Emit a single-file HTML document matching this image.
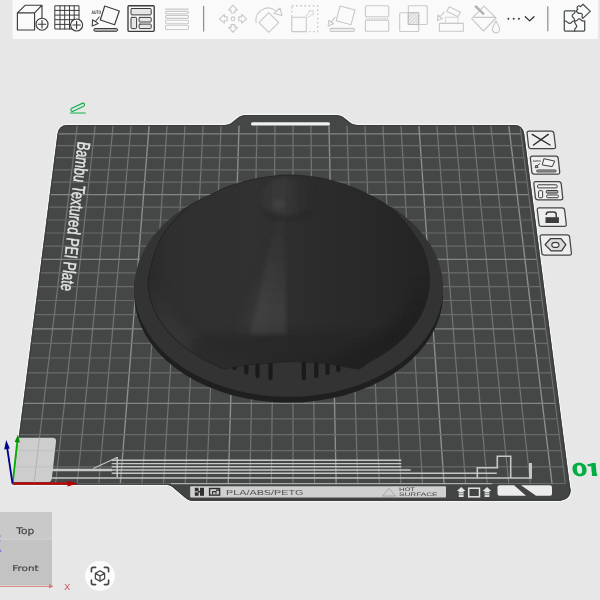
<!DOCTYPE html>
<html><head><meta charset="utf-8"><title>Plate</title>
<style>html,body{margin:0;padding:0;background:#e7e7e7;overflow:hidden}svg{display:block}text{font-family:"Liberation Sans",sans-serif;text-rendering:geometricPrecision}</style></head><body>
<svg width="600" height="600" viewBox="0 0 600 600">
<defs>
<linearGradient id="dg" x1="148" y1="0" x2="430" y2="0" gradientUnits="userSpaceOnUse"><stop offset="0" stop-color="#2a2a2a"/><stop offset="0.07" stop-color="#2f2f2f"/><stop offset="0.38" stop-color="#313131"/><stop offset="0.5" stop-color="#2e2e2e"/><stop offset="0.8" stop-color="#282828"/><stop offset="1" stop-color="#242424"/></linearGradient>
<linearGradient id="skg" x1="148" y1="0" x2="430" y2="0" gradientUnits="userSpaceOnUse"><stop offset="0" stop-color="#3a3a3a"/><stop offset="0.35" stop-color="#343434"/><stop offset="0.5" stop-color="#262626"/><stop offset="0.75" stop-color="#1c1c1c"/><stop offset="1" stop-color="#1e1e1e"/></linearGradient>
<linearGradient id="vf" x1="0" y1="275" x2="0" y2="335" gradientUnits="userSpaceOnUse"><stop offset="0" stop-color="#000"/><stop offset="1" stop-color="#fff"/></linearGradient><mask id="rm" maskUnits="userSpaceOnUse" x="100" y="150" width="400" height="300"><rect x="100" y="150" width="400" height="300" fill="url(#vf)"/></mask>
<radialGradient id="hl" cx="278" cy="330" r="60" gradientUnits="userSpaceOnUse" gradientTransform="translate(278 330) scale(0.45 1.6) translate(-278 -330)"><stop offset="0" stop-color="#4a4a4a" stop-opacity="0.7"/><stop offset="1" stop-color="#4a4a4a" stop-opacity="0"/></radialGradient>
<radialGradient id="kn" cx="280" cy="192" r="30" gradientUnits="userSpaceOnUse"><stop offset="0" stop-color="#454545"/><stop offset="0.6" stop-color="#353535"/><stop offset="1" stop-color="#2f2f2f" stop-opacity="0"/></radialGradient>
<radialGradient id="sk" cx="0.5" cy="0.5" r="0.5"><stop offset="0.7" stop-color="#1a1a1a" stop-opacity="0"/><stop offset="0.9" stop-color="#1a1a1a" stop-opacity="0.35"/><stop offset="1" stop-color="#1a1a1a" stop-opacity="0.5"/></radialGradient>
<linearGradient id="wb" x1="0" y1="322" x2="0" y2="372" gradientUnits="userSpaceOnUse"><stop offset="0" stop-color="#222" stop-opacity="0"/><stop offset="0.25" stop-color="#222" stop-opacity="0.45"/><stop offset="1" stop-color="#1e1e1e" stop-opacity="0.6"/></linearGradient>
<linearGradient id="st" x1="0" y1="214" x2="0" y2="332" gradientUnits="userSpaceOnUse"><stop offset="0" stop-color="#4c4c4c" stop-opacity="0.06"/><stop offset="0.35" stop-color="#4c4c4c" stop-opacity="0.22"/><stop offset="0.8" stop-color="#4c4c4c" stop-opacity="0.5"/><stop offset="1" stop-color="#4c4c4c" stop-opacity="0.45"/></linearGradient>
<linearGradient id="kg" x1="260" y1="0" x2="316" y2="0" gradientUnits="userSpaceOnUse"><stop offset="0" stop-color="#343434"/><stop offset="0.4" stop-color="#393939"/><stop offset="0.7" stop-color="#2f2f2f"/><stop offset="1" stop-color="#2a2a2a"/></linearGradient>
<filter id="b4" x="-20%" y="-20%" width="140%" height="140%"><feGaussianBlur stdDeviation="4"/></filter>
<filter id="b25" x="-50%" y="-20%" width="200%" height="140%"><feGaussianBlur stdDeviation="2.2"/></filter>
<filter id="b3" x="-50%" y="-20%" width="200%" height="140%"><feGaussianBlur stdDeviation="3"/></filter><filter id="b2" x="-50%" y="-50%" width="200%" height="200%"><feGaussianBlur stdDeviation="2"/></filter>
<clipPath id="gc"><rect x="0" y="125.8" width="600" height="358.5"/></clipPath>
<clipPath id="fc"><rect x="0" y="207" width="600" height="300"/></clipPath>
<clipPath id="pc"><path id="plp" d="M57.5 134 Q58.7 125 67.7 125 L225 125 C234 125 236 115 246 115 L336 115 C346 115 348 125 357 125 L514 125 Q523 125 524.2 134 L570 487 C572 495 567.5 500.7 558.5 500.7 L192 500.7 Q188 500.5 185 497.5 L172 486.5 Q170 484.8 166 484.8 L12.7 484.8 Z"/></clipPath>
</defs>
<rect width="600" height="600" fill="#e7e7e7"/>
<rect x="12.5" y="0" width="585.5" height="39" fill="#fafafa"/>
<path d="M57.5 134 Q58.7 125 67.7 125 L225 125 C234 125 236 115 246 115 L336 115 C346 115 348 125 357 125 L514 125 Q523 125 524.2 134 L570 487 C572 495 567.5 500.7 558.5 500.7 L192 500.7 Q188 500.5 185 497.5 L172 486.5 Q170 484.8 166 484.8 L12.7 484.8 Z" fill="#454747" stroke="#f8f8f8" stroke-width="2.4" stroke-opacity="0.85"/>
<path d="M57.5 134 Q58.7 125 67.7 125 L225 125 C234 125 236 115 246 115 L336 115 C346 115 348 125 357 125 L514 125 Q523 125 524.2 134 L570 487 C572 495 567.5 500.7 558.5 500.7 L192 500.7 Q188 500.5 185 497.5 L172 486.5 Q170 484.8 166 484.8 L12.7 484.8 Z" fill="#454747"/>
<g clip-path="url(#pc)">
<rect x="0" y="484.8" width="600" height="20" fill="#434545"/>
<g clip-path="url(#gc)">
<line x1="33" y1="491.6" x2="77.9" y2="119.8" stroke="#717575" stroke-width="1.2"/>
<line x1="54.7" y1="491.6" x2="95.8" y2="119.8" stroke="#717575" stroke-width="1.2"/>
<line x1="76.4" y1="491.6" x2="113.7" y2="119.8" stroke="#717575" stroke-width="1.2"/>
<line x1="98" y1="491.6" x2="131.6" y2="119.8" stroke="#717575" stroke-width="1.2"/>
<line x1="119.7" y1="491.6" x2="149.6" y2="119.8" stroke="#8c9090" stroke-width="1.35"/>
<line x1="141.4" y1="491.6" x2="167.5" y2="119.8" stroke="#717575" stroke-width="1.2"/>
<line x1="163" y1="491.6" x2="185.4" y2="119.8" stroke="#717575" stroke-width="1.2"/>
<line x1="184.7" y1="491.6" x2="203.4" y2="119.8" stroke="#717575" stroke-width="1.2"/>
<line x1="206.3" y1="491.6" x2="221.3" y2="119.8" stroke="#717575" stroke-width="1.2"/>
<line x1="228" y1="491.6" x2="239.2" y2="119.8" stroke="#8c9090" stroke-width="1.35"/>
<line x1="249.7" y1="491.6" x2="257.1" y2="119.8" stroke="#717575" stroke-width="1.2"/>
<line x1="271.3" y1="491.6" x2="275.1" y2="119.8" stroke="#717575" stroke-width="1.2"/>
<line x1="293" y1="491.6" x2="293" y2="119.8" stroke="#717575" stroke-width="1.2"/>
<line x1="314.7" y1="491.6" x2="310.9" y2="119.8" stroke="#717575" stroke-width="1.2"/>
<line x1="336.3" y1="491.6" x2="328.9" y2="119.8" stroke="#8c9090" stroke-width="1.35"/>
<line x1="358" y1="491.6" x2="346.8" y2="119.8" stroke="#717575" stroke-width="1.2"/>
<line x1="379.7" y1="491.6" x2="364.7" y2="119.8" stroke="#717575" stroke-width="1.2"/>
<line x1="401.3" y1="491.6" x2="382.6" y2="119.8" stroke="#717575" stroke-width="1.2"/>
<line x1="423" y1="491.6" x2="400.6" y2="119.8" stroke="#717575" stroke-width="1.2"/>
<line x1="444.6" y1="491.6" x2="418.5" y2="119.8" stroke="#8c9090" stroke-width="1.35"/>
<line x1="466.3" y1="491.6" x2="436.4" y2="119.8" stroke="#717575" stroke-width="1.2"/>
<line x1="488" y1="491.6" x2="454.4" y2="119.8" stroke="#717575" stroke-width="1.2"/>
<line x1="509.6" y1="491.6" x2="472.3" y2="119.8" stroke="#717575" stroke-width="1.2"/>
<line x1="531.3" y1="491.6" x2="490.2" y2="119.8" stroke="#717575" stroke-width="1.2"/>
<line x1="553" y1="491.6" x2="508.1" y2="119.8" stroke="#8c9090" stroke-width="1.35"/>
<line x1="3.9" y1="466.8" x2="563.2" y2="466.8" stroke="#676b6b" stroke-width="1.2"/>
<line x1="6.1" y1="450.6" x2="561.2" y2="450.6" stroke="#676b6b" stroke-width="1.2"/>
<line x1="8.3" y1="434.6" x2="559.1" y2="434.6" stroke="#676b6b" stroke-width="1.2"/>
<line x1="10.4" y1="418.8" x2="557.1" y2="418.8" stroke="#676b6b" stroke-width="1.2"/>
<line x1="12.5" y1="403.3" x2="555.2" y2="403.3" stroke="#828686" stroke-width="1.3"/>
<line x1="14.6" y1="387.9" x2="553.2" y2="387.9" stroke="#676b6b" stroke-width="1.2"/>
<line x1="16.7" y1="372.8" x2="551.3" y2="372.8" stroke="#676b6b" stroke-width="1.2"/>
<line x1="18.7" y1="358" x2="549.4" y2="358" stroke="#676b6b" stroke-width="1.2"/>
<line x1="20.7" y1="343.3" x2="547.6" y2="343.3" stroke="#676b6b" stroke-width="1.2"/>
<line x1="22.6" y1="328.8" x2="545.7" y2="328.8" stroke="#828686" stroke-width="1.3"/>
<line x1="24.6" y1="314.6" x2="543.9" y2="314.6" stroke="#676b6b" stroke-width="1.2"/>
<line x1="26.5" y1="300.5" x2="542.2" y2="300.5" stroke="#676b6b" stroke-width="1.2"/>
<line x1="28.4" y1="286.6" x2="540.4" y2="286.6" stroke="#676b6b" stroke-width="1.2"/>
<line x1="30.2" y1="272.9" x2="538.7" y2="272.9" stroke="#676b6b" stroke-width="1.2"/>
<line x1="32" y1="259.4" x2="536.9" y2="259.4" stroke="#828686" stroke-width="1.3"/>
<line x1="33.8" y1="246.1" x2="535.3" y2="246.1" stroke="#676b6b" stroke-width="1.2"/>
<line x1="35.6" y1="233" x2="533.6" y2="233" stroke="#676b6b" stroke-width="1.2"/>
<line x1="37.4" y1="220" x2="531.9" y2="220" stroke="#676b6b" stroke-width="1.2"/>
<line x1="39.1" y1="207.2" x2="530.3" y2="207.2" stroke="#676b6b" stroke-width="1.2"/>
<line x1="40.8" y1="194.6" x2="528.7" y2="194.6" stroke="#828686" stroke-width="1.3"/>
<line x1="42.5" y1="182.1" x2="527.1" y2="182.1" stroke="#676b6b" stroke-width="1.2"/>
<line x1="44.2" y1="169.8" x2="525.6" y2="169.8" stroke="#676b6b" stroke-width="1.2"/>
<line x1="45.8" y1="157.7" x2="524" y2="157.7" stroke="#676b6b" stroke-width="1.2"/>
<line x1="47.5" y1="145.7" x2="522.5" y2="145.7" stroke="#676b6b" stroke-width="1.2"/>
<line x1="49.1" y1="133.8" x2="521" y2="133.8" stroke="#828686" stroke-width="1.3"/>
<line x1="565.3" y1="483.3" x2="519.8" y2="124.5" stroke="#707474" stroke-width="1"/>
</g>
<line x1="10.3" y1="483.5" x2="565.3" y2="483.5" stroke="#6c7070" stroke-width="0.9"/>
<path d="M57.5 134 Q58.7 125 67.7 125 L225 125 C234 125 236 115 246 115 L336 115 C346 115 348 125 357 125 L514 125 Q523 125 524.2 134 L570 487 C572 495 567.5 500.7 558.5 500.7 L192 500.7 Q188 500.5 185 497.5 L172 486.5 Q170 484.8 166 484.8 L12.7 484.8 Z" fill="none" stroke="#383a3a" stroke-width="2.2" opacity="0.85"/>
</g>
<rect x="251" y="122.3" width="79" height="3.2" rx="1.6" fill="#f0f0f0"/>
<g clip-path="url(#fc)">
<polygon points="442.9,288 441.6,278.6 439.1,269.3 435.6,260.3 431,251.6 425.3,243.2 418.7,235.2 411.2,227.7 402.9,220.6 393.8,214.1 383.9,208.2 373.5,202.9 362.4,198.3 350.9,194.3 339,191 326.8,188.4 314.3,186.6 301.6,185.5 288.9,185.1 276.2,185.5 263.5,186.6 251,188.4 238.8,191 226.9,194.3 215.3,198.3 204.3,202.9 193.8,208.2 183.9,214.1 174.8,220.6 166.4,227.7 158.9,235.2 152.2,243.2 146.6,251.6 141.9,260.3 138.3,269.3 135.8,278.6 134.5,288 134.3,297.5 135.3,307 137.5,316.5 140.9,325.8 145.5,334.9 151.2,343.7 158.1,352.2 166,360.2 175,367.7 185,374.7 195.8,380.9 207.5,386.5 219.8,391.3 232.8,395.4 246.3,398.5 260.1,400.8 274.2,402.2 288.4,402.6 302.7,402.2 316.8,400.8 330.6,398.5 344.1,395.4 357.1,391.3 369.5,386.5 381.1,380.9 392,374.7 402,367.7 411,360.2 419,352.2 425.9,343.7 431.7,334.9 436.3,325.8 439.7,316.5 442,307 443,297.5" fill="#1f1f1f"/>
<path d="M134.3 289 L134.3 282 L443 282 L443 289 Z" fill="#232323"/>
<polygon points="442.9,282.2 441.6,272.8 439.1,263.5 435.6,254.5 431,245.8 425.3,237.4 418.7,229.4 411.2,221.9 402.9,214.8 393.8,208.3 383.9,202.4 373.5,197.1 362.4,192.5 350.9,188.5 339,185.2 326.8,182.6 314.3,180.8 301.6,179.7 288.9,179.3 276.2,179.7 263.5,180.8 251,182.6 238.8,185.2 226.9,188.5 215.3,192.5 204.3,197.1 193.8,202.4 183.9,208.3 174.8,214.8 166.4,221.9 158.9,229.4 152.2,237.4 146.6,245.8 141.9,254.5 138.3,263.5 135.8,272.8 134.5,282.2 134.3,291.7 135.3,301.2 137.5,310.7 140.9,320 145.5,329.1 151.2,337.9 158.1,346.4 166,354.4 175,361.9 185,368.9 195.8,375.1 207.5,380.7 219.8,385.5 232.8,389.6 246.3,392.7 260.1,395 274.2,396.4 288.4,396.8 302.7,396.4 316.8,395 330.6,392.7 344.1,389.6 357.1,385.5 369.5,380.7 381.1,375.1 392,368.9 402,361.9 411,354.4 419,346.4 425.9,337.9 431.7,329.1 436.3,320 439.7,310.7 442,301.2 443,291.7" fill="#333333"/>
</g>
<line x1="234.5" y1="358" x2="234.5" y2="368.1" stroke="#1a1a1a" stroke-width="4.2" stroke-linecap="round"/>
<line x1="246.3" y1="358" x2="246.3" y2="372.6" stroke="#1a1a1a" stroke-width="4.2" stroke-linecap="round"/>
<line x1="257.5" y1="358" x2="257.5" y2="376.1" stroke="#1a1a1a" stroke-width="4.2" stroke-linecap="round"/>
<line x1="270.5" y1="358" x2="270.5" y2="378.1" stroke="#1a1a1a" stroke-width="4.2" stroke-linecap="round"/>
<line x1="303.8" y1="358" x2="303.8" y2="378.1" stroke="#1a1a1a" stroke-width="4.2" stroke-linecap="round"/>
<line x1="316.3" y1="358" x2="316.3" y2="376.1" stroke="#1a1a1a" stroke-width="4.2" stroke-linecap="round"/>
<line x1="327.5" y1="358" x2="327.5" y2="373.1" stroke="#1a1a1a" stroke-width="4.2" stroke-linecap="round"/>
<line x1="338.3" y1="358" x2="338.3" y2="370.1" stroke="#1a1a1a" stroke-width="4.2" stroke-linecap="round"/>
<clipPath id="dc"><path d="M148.4 282 C148.7 280.3 148.9 276.5 150 272 C151.1 267.5 152.5 261.2 154.7 255 C156.9 248.8 159.6 241 163.3 235 C167 229 172.2 223.8 176.7 219 C181.1 214.2 184.7 209.8 190 206 C195.3 202.2 202 199.6 208.7 196.3 C215.4 193.1 221.9 189.4 230 186.5 C238.1 183.6 247.9 180.8 257.5 179 C267.1 177.2 277.1 175.6 287.5 175.5 C297.9 175.4 309.6 176.6 320 178.5 C330.4 180.4 341.7 184.1 350 187 C358.3 189.9 363.3 192.5 370 196 C376.7 199.5 384.7 204 390 208 C395.3 212 398.7 216.4 402 220 C405.3 223.6 407.5 226.4 410 229.7 C412.5 233 415 236.9 417 240 C419 243.1 420.3 244.2 422 248.3 C423.7 252.4 426.1 258.7 427.3 264.3 C428.5 269.9 428.7 279.1 429 282 L428.5 289.5 L426.9 297.9 L424.3 306.2 L420.6 314.4 L416 322.2 L410.4 329.8 L403.9 337 L396.5 343.7 L388.3 350 L379.4 355.8 L369.7 361 L359.5 368.5 L359.5 368.5 C357.9 368.3 353.2 367.8 350 367.3 C346.8 366.8 344.2 366.2 340 365.5 C335.8 364.8 330 363.6 325 363 C320 362.4 315.8 362 310 361.7 C304.2 361.4 296.7 360.9 290 361 C283.3 361.1 275.8 362.1 270 362.5 C264.2 362.9 260 363.1 255 363.6 C250 364.1 243.8 364.9 240 365.5 C236.2 366.1 234.7 366.5 232 367 C229.3 367.5 225 368.3 223.6 368.6 L223.6 368.6 L212.6 363.3 L202.2 358.2 L192.6 352.4 L183.7 346 L175.7 339.1 L168.7 331.7 L162.6 323.9 L157.5 315.8 L153.6 307.3 L150.7 298.7 L149 289.9Z"/></clipPath>
<path d="M148.4 282 C148.7 280.3 148.9 276.5 150 272 C151.1 267.5 152.5 261.2 154.7 255 C156.9 248.8 159.6 241 163.3 235 C167 229 172.2 223.8 176.7 219 C181.1 214.2 184.7 209.8 190 206 C195.3 202.2 202 199.6 208.7 196.3 C215.4 193.1 221.9 189.4 230 186.5 C238.1 183.6 247.9 180.8 257.5 179 C267.1 177.2 277.1 175.6 287.5 175.5 C297.9 175.4 309.6 176.6 320 178.5 C330.4 180.4 341.7 184.1 350 187 C358.3 189.9 363.3 192.5 370 196 C376.7 199.5 384.7 204 390 208 C395.3 212 398.7 216.4 402 220 C405.3 223.6 407.5 226.4 410 229.7 C412.5 233 415 236.9 417 240 C419 243.1 420.3 244.2 422 248.3 C423.7 252.4 426.1 258.7 427.3 264.3 C428.5 269.9 428.7 279.1 429 282 L428.5 289.5 L426.9 297.9 L424.3 306.2 L420.6 314.4 L416 322.2 L410.4 329.8 L403.9 337 L396.5 343.7 L388.3 350 L379.4 355.8 L369.7 361 L359.5 368.5 L359.5 368.5 C357.9 368.3 353.2 367.8 350 367.3 C346.8 366.8 344.2 366.2 340 365.5 C335.8 364.8 330 363.6 325 363 C320 362.4 315.8 362 310 361.7 C304.2 361.4 296.7 360.9 290 361 C283.3 361.1 275.8 362.1 270 362.5 C264.2 362.9 260 363.1 255 363.6 C250 364.1 243.8 364.9 240 365.5 C236.2 366.1 234.7 366.5 232 367 C229.3 367.5 225 368.3 223.6 368.6 L223.6 368.6 L212.6 363.3 L202.2 358.2 L192.6 352.4 L183.7 346 L175.7 339.1 L168.7 331.7 L162.6 323.9 L157.5 315.8 L153.6 307.3 L150.7 298.7 L149 289.9Z" fill="url(#dg)"/>
<path d="M148.4 282 C148.7 280.3 148.9 276.5 150 272 C151.1 267.5 152.5 261.2 154.7 255 C156.9 248.8 159.6 241 163.3 235 C167 229 172.2 223.8 176.7 219 C181.1 214.2 184.7 209.8 190 206 C195.3 202.2 202 199.6 208.7 196.3 C215.4 193.1 221.9 189.4 230 186.5 C238.1 183.6 247.9 180.8 257.5 179 C267.1 177.2 277.1 175.6 287.5 175.5 C297.9 175.4 309.6 176.6 320 178.5 C330.4 180.4 341.7 184.1 350 187 C358.3 189.9 363.3 192.5 370 196 C376.7 199.5 384.7 204 390 208 C395.3 212 398.7 216.4 402 220 C405.3 223.6 407.5 226.4 410 229.7 C412.5 233 415 236.9 417 240 C419 243.1 420.3 244.2 422 248.3 C423.7 252.4 426.1 258.7 427.3 264.3 C428.5 269.9 428.7 279.1 429 282 L428.5 289.5 L426.9 297.9 L424.3 306.2 L420.6 314.4 L416 322.2 L410.4 329.8 L403.9 337 L396.5 343.7 L388.3 350 L379.4 355.8 L369.7 361 L359.5 368.5 L359.5 368.5 C357.9 368.3 353.2 367.8 350 367.3 C346.8 366.8 344.2 366.2 340 365.5 C335.8 364.8 330 363.6 325 363 C320 362.4 315.8 362 310 361.7 C304.2 361.4 296.7 360.9 290 361 C283.3 361.1 275.8 362.1 270 362.5 C264.2 362.9 260 363.1 255 363.6 C250 364.1 243.8 364.9 240 365.5 C236.2 366.1 234.7 366.5 232 367 C229.3 367.5 225 368.3 223.6 368.6 L223.6 368.6 L212.6 363.3 L202.2 358.2 L192.6 352.4 L183.7 346 L175.7 339.1 L168.7 331.7 L162.6 323.9 L157.5 315.8 L153.6 307.3 L150.7 298.7 L149 289.9Z" fill="none" stroke="#1f1f1f" stroke-width="2" opacity="0.8" stroke-linejoin="round"/>
<path d="M148.4 282 C148.7 280.3 148.9 276.5 150 272 C151.1 267.5 152.5 261.2 154.7 255 C156.9 248.8 159.6 241 163.3 235 C167 229 172.2 223.8 176.7 219 C181.1 214.2 184.7 209.8 190 206 C195.3 202.2 202 199.6 208.7 196.3 C215.4 193.1 221.9 189.4 230 186.5 C238.1 183.6 247.9 180.8 257.5 179 C267.1 177.2 277.1 175.6 287.5 175.5 C297.9 175.4 309.6 176.6 320 178.5 C330.4 180.4 341.7 184.1 350 187 C358.3 189.9 363.3 192.5 370 196 C376.7 199.5 384.7 204 390 208 C395.3 212 398.7 216.4 402 220 C405.3 223.6 407.5 226.4 410 229.7 C412.5 233 415 236.9 417 240 C419 243.1 420.3 244.2 422 248.3 C423.7 252.4 426.1 258.7 427.3 264.3 C428.5 269.9 428.7 279.1 429 282 L428.5 289.5 L426.9 297.9 L424.3 306.2 L420.6 314.4 L416 322.2 L410.4 329.8 L403.9 337 L396.5 343.7 L388.3 350 L379.4 355.8 L369.7 361 L359.5 368.5 L359.5 368.5 C357.9 368.3 353.2 367.8 350 367.3 C346.8 366.8 344.2 366.2 340 365.5 C335.8 364.8 330 363.6 325 363 C320 362.4 315.8 362 310 361.7 C304.2 361.4 296.7 360.9 290 361 C283.3 361.1 275.8 362.1 270 362.5 C264.2 362.9 260 363.1 255 363.6 C250 364.1 243.8 364.9 240 365.5 C236.2 366.1 234.7 366.5 232 367 C229.3 367.5 225 368.3 223.6 368.6 L223.6 368.6 L212.6 363.3 L202.2 358.2 L192.6 352.4 L183.7 346 L175.7 339.1 L168.7 331.7 L162.6 323.9 L157.5 315.8 L153.6 307.3 L150.7 298.7 L149 289.9Z" fill="url(#dg)"/>
<g clip-path="url(#dc)">
<path d="M356.7 201.3 L371.5 208 L384.9 215.9 L396.6 225 L406.5 235 L414.3 245.8 L420.1 257.2 L423.5 269 L424.7 281 L423.5 293 L420.1 304.8 L414.3 316.2 L406.5 327 L396.6 337 L384.9 346.1 L371.5 354 L356.7 360.7 L340.7 366 L323.9 369.9 L306.5 372.2 L288.7 373 L270.9 372.2 L253.5 369.9 L236.7 366 L220.7 360.7 L205.9 354 L192.5 346.1 L180.8 337 L170.9 327 L163.1 316.2 L157.3 304.8 L153.9 293 L152.7 281 L153.9 269 L157.3 257.2 L163.1 245.8 L170.9 235 L180.8 225 L192.5 215.9 L205.9 208 L220.7 201.3" fill="none" stroke="url(#skg)" stroke-width="20" opacity="0.75" filter="url(#b4)" mask="url(#rm)"/>
<path d="M190 338 Q290 326 390 338 L390 390 L190 390 Z" fill="#232323" opacity="0.45" filter="url(#b4)"/>
<polygon points="277,218 285,216 286,334 250,334" fill="url(#st)" filter="url(#b25)"/>
<polygon points="272,235 281,235 268,334 234,334" fill="url(#st)" opacity="0.3" filter="url(#b4)"/>
<ellipse cx="288" cy="197" rx="27" ry="19.5" fill="url(#kg)" filter="url(#b2)"/>
<path d="M266 214 Q288 224 310 213" fill="none" stroke="#242424" stroke-width="2.5" opacity="0.6" filter="url(#b2)"/>
<ellipse cx="279" cy="204" rx="7" ry="5" fill="#505050" opacity="0.4" filter="url(#b2)"/>
</g>
<g clip-path="url(#pc)">
<path d="M9.6 482 L48.5 482 Q51.5 482 51.9 478 L56 441.7 Q56.4 437.7 52.4 437.7 L15.4 437.7 Z" fill="#cdcdcd"/>
<line x1="34.2" y1="482" x2="39.5" y2="437.7" stroke="#aeb0b0" stroke-width="0.9"/>
<line x1="14.6" y1="466.8" x2="53.2" y2="466.8" stroke="#bdbfbf" stroke-width="0.9"/>
<line x1="16.7" y1="450.6" x2="55" y2="450.6" stroke="#bdbfbf" stroke-width="0.9"/>
</g>
<g stroke="#c6c6c6" fill="none" stroke-linecap="butt">
<line x1="52" y1="470" x2="112" y2="470" stroke-width="2.6"/>
<line x1="51.5" y1="478" x2="532" y2="478" stroke-width="1.3"/>
<line x1="93.3" y1="468.6" x2="117" y2="457.5" stroke-width="1.1"/>
<line x1="117.2" y1="457" x2="117.2" y2="477" stroke-width="1.5"/>
<line x1="111.7" y1="460.3" x2="401.3" y2="460.3" stroke-width="1.45"/>
<line x1="111.7" y1="463.6" x2="401.3" y2="463.6" stroke-width="1.45"/>
<line x1="111.7" y1="466.8" x2="401.3" y2="466.8" stroke-width="1.45"/>
<line x1="111.7" y1="470" x2="410.7" y2="470" stroke-width="1.45"/>
<line x1="111.7" y1="473.3" x2="496.8" y2="473.3" stroke-width="1.45"/>
<path d="M477.3 478 V467.7 H497.3 V456.2 H510.7 V478" stroke-width="1.6"/>
<line x1="530.5" y1="463" x2="530.5" y2="478.5" stroke-width="3"/>
<line x1="171" y1="483.7" x2="492" y2="483.7" stroke-width="1" stroke="#bdbdbd"/>
</g>
<rect x="190.2" y="486.3" width="255.8" height="11.1" rx="1" fill="#d0d0d0"/>
<g fill="#303030"><rect x="194.8" y="487.8" width="3.8" height="3.5"/><rect x="194.8" y="492.3" width="3.8" height="3.5"/><rect x="200" y="487.8" width="4" height="8"/><rect x="198" y="490.9" width="3" height="1.6"/></g>
<rect x="209.6" y="488.5" width="10" height="6.6" fill="none" stroke="#303030" stroke-width="1.4"/><path d="M212.6 494.6 V491.6 H216 V494" fill="none" stroke="#303030" stroke-width="1.1"/><rect x="216" y="489.4" width="3" height="1.4" fill="#303030"/>
<text opacity="0.99" x="226" y="495.2" font-size="7.3" fill="#505050" textLength="77.5" lengthAdjust="spacingAndGlyphs">PLA/ABS/PETG</text>
<path d="M389 488.3 L395.6 496 H382.4 Z" fill="none" stroke="#9a9a9a" stroke-width="0.8"/>
<text opacity="0.99" x="399" y="491.4" font-size="5" fill="#444" textLength="16" lengthAdjust="spacingAndGlyphs">HOT</text>
<text opacity="0.99" x="399" y="496.2" font-size="5" fill="#444" textLength="38.5" lengthAdjust="spacingAndGlyphs">SURFACE</text>
<path d="M461.2 487 L465.5 491 H463.6 V497 H458.8 V491 H456.9 Z" fill="#e4e4e4"/>
<path d="M487 487 L491.3 491 H489.4 V497 H484.6 V491 H482.7 Z" fill="#e4e4e4"/>
<path d="M458.6 492.7 H463.8 M458.6 494.7 H463.8" stroke="#434545" stroke-width="0.6"/>
<path d="M484.4 492.7 H489.6 M484.4 494.7 H489.6" stroke="#434545" stroke-width="0.6"/>
<rect x="468.7" y="488.2" width="10.8" height="8.6" fill="none" stroke="#e4e4e4" stroke-width="1.5"/>
<path d="M499.5 485.2 H514 L526 495.8 H499.5 Q497.5 495.8 497.5 493.8 V487.2 Q497.5 485.2 499.5 485.2 Z" fill="#ececec"/>
<path d="M521 485.2 H550 Q552 485.2 552 487.2 V493.8 Q552 495.8 550 495.8 H536 Z" fill="#ececec"/>
<text opacity="0.99" transform="translate(78 141.3) rotate(96.6)" font-size="18" fill="#e6e6e6" stroke="#e6e6e6" stroke-width="0.45" textLength="150" lengthAdjust="spacingAndGlyphs">Bambu Textured PEI Plate</text>
<text opacity="0.99" transform="translate(572 476) skewX(5) scale(1.5 1)" font-size="17.8" font-weight="900" letter-spacing="-1.6" fill="#00ae42" style="font-family:'Noto Sans CJK SC',sans-serif">01</text>
<rect x="587.3" y="472.7" width="4.6" height="4" fill="#e7e7e7"/><rect x="597.2" y="472.7" width="2.8" height="4" fill="#e7e7e7"/>
<g stroke="#12b14e" fill="none" stroke-width="1.15"><rect x="-7.4" y="-1.6" width="14.8" height="3.2" rx="1.6" transform="translate(77.7 107.3) rotate(-25.5)"/><line x1="70" y1="113" x2="85.7" y2="113" stroke-width="1"/></g>
<line x1="12.5" y1="483.6" x2="69" y2="483.6" stroke="#d40000" stroke-width="2"/><polygon points="67.5,480.8 78,483.6 67.5,486.4" fill="#b00000"/>
<line x1="12.7" y1="483.5" x2="17.3" y2="441" stroke="#00b000" stroke-width="1.8"/><polygon points="14.6,442 18,434.5 19.8,442.6" fill="#009000"/>
<line x1="12.5" y1="483.5" x2="7.2" y2="448" stroke="#000090" stroke-width="1.8"/><polygon points="4.2,449.5 6.2,440 9.8,448.6" fill="#000090"/>
<path d="M527.1 133.4 Q526.8 131.2 529 131.2 L551.4 131.2 Q553.6 131.2 553.9 133.4 L555.5 146.5 Q555.8 148.7 553.6 148.7 L531.1 148.7 Q528.9 148.7 528.6 146.5 Z" fill="#eeeeee" stroke="#454545" stroke-width="1.25"/>
<path d="M530.4 158.4 Q530.2 156.2 532.4 156.2 L555.8 156.2 Q558 156.2 558.2 158.4 L559.7 171.9 Q559.9 174.1 557.7 174.1 L534.2 174.1 Q532 174.1 531.8 171.9 Z" fill="#eeeeee" stroke="#454545" stroke-width="1.25"/>
<path d="M533.9 183.8 Q533.6 181.6 535.8 181.6 L558.7 181.6 Q560.9 181.6 561.2 183.8 L562.7 197.6 Q563 199.8 560.8 199.8 L537.9 199.8 Q535.7 199.8 535.4 197.6 Z" fill="#eeeeee" stroke="#454545" stroke-width="1.25"/>
<path d="M537.3 210.1 Q537.1 207.9 539.3 207.9 L562.2 207.9 Q564.4 207.9 564.6 210.1 L566.3 224.2 Q566.5 226.4 564.3 226.4 L541.4 226.4 Q539.2 226.4 539 224.2 Z" fill="#eeeeee" stroke="#454545" stroke-width="1.25"/>
<path d="M540.1 237 Q539.9 234.8 542.1 234.8 L567.1 234.8 Q569.3 234.8 569.6 237 L571.4 252.9 Q571.7 255.1 569.5 255.1 L544.2 255.1 Q542 255.1 541.8 252.9 Z" fill="#eeeeee" stroke="#454545" stroke-width="1.25"/>
<g fill="none" stroke="#2b2b2b" stroke-width="1.4" stroke-linecap="round">
<path d="M532.2 134.4 L550 145 M548.3 134.4 L533.5 145"/>
</g>
<g fill="none" stroke="#3a3a3a" stroke-width="1">
<path d="M543.9 158.7 L554.8 161.1 L552.2 166.6 L542.2 164.9 Z" fill="#f4f4f4"/>
<path d="M540 163.6 L536.6 166.2 M535 167.8 L538.2 167.4 L536 165 Z" stroke-width="0.9"/>
<rect x="536.6" y="169.9" width="19.6" height="2.1" rx="1" fill="#a0a0a0" stroke-width="0.8"/>
</g>
<text opacity="0.99" x="532.8" y="162" font-size="3" font-weight="bold" fill="#333" textLength="8" lengthAdjust="spacingAndGlyphs">AUTO</text>
<g fill="#f6f6f6" stroke="#3a3a3a" stroke-width="1">
<rect x="537.6" y="184.8" width="19.5" height="3.1" rx="0.8"/>
<rect x="538.6" y="190.7" width="4" height="7" rx="0.8"/>
<rect x="546.3" y="190.5" width="11.5" height="2.6" rx="0.8" fill="#aaa"/>
<rect x="546.7" y="195" width="11.6" height="2.7" rx="0.8"/>
</g>
<rect x="545.5" y="217.2" width="13.4" height="5.8" fill="#3c3c3c"/>
<path d="M546.3 215 V214.2 Q546.3 211.9 548.8 211.9 H553.6 Q556.2 211.9 556.2 214.2 V217.5" fill="none" stroke="#3c3c3c" stroke-width="1.5"/>
<path d="M545.1 244.6 L550.4 238.7 H560.9 L565.8 244.6 L561.6 250.9 H551.1 Z" fill="#dcdcdc" stroke="#3a3a3a" stroke-width="1.3" stroke-linejoin="round"/>
<ellipse cx="555.4" cy="244.9" rx="3.6" ry="2.5" fill="#f2f2f2" stroke="#3a3a3a" stroke-width="1.2"/>
<rect x="0" y="512" width="52" height="27.5" fill="#c9c9c9"/>
<rect x="0" y="539.5" width="52" height="45.5" fill="#c3c3c3"/>
<text opacity="0.99" transform="translate(25.2 533.8) scale(1.03 0.9)" font-size="10.3" stroke="#444" stroke-width="0.25" text-anchor="middle" fill="#444" style="font-family:'DejaVu Sans',sans-serif">Top</text>
<text opacity="0.99" transform="translate(25.4 570.6) scale(1.03 0.8)" font-size="10.1" stroke="#444" stroke-width="0.25" text-anchor="middle" fill="#444" style="font-family:'DejaVu Sans',sans-serif">Front</text>
<line x1="0" y1="586.3" x2="50" y2="586.3" stroke="#d27a7a" stroke-width="1"/><polygon points="49,584 53.5,586.3 49,588.6" fill="#d27a7a"/>
<text opacity="0.99" x="63.9" y="589.7" font-size="11" fill="#cc6a6a" style="font-family:'DejaVu Sans',sans-serif">x</text>
<circle cx="100" cy="576" r="15" fill="#fbfbfb"/>
<rect x="0" y="535.4" width="1" height="1.2" fill="#8a8ad4"/><rect x="0" y="540" width="1" height="1.2" fill="#9a9ad4"/><polygon points="0,548.4 1.6,552 0,552" fill="#8080d8"/>
<g fill="none" stroke="#3b3b3b" stroke-width="1.15" stroke-linejoin="round" stroke-linecap="round">
<path d="M17.4 12.8 H34.6 V30 H17.4 Z M17.4 12.8 L25.4 5.2 H42 L34.6 12.8 M42 5.2 V18"/>
<circle cx="42" cy="24.2" r="6" fill="#fafafa"/><path d="M38.3 24.2 H45.7 M42 20.5 V27.9"/>
<path d="M55.2 5.8 H79 V29 H55.2 Z M60 5.8 V29 M55.2 10.4 H79 M64.7 5.8 V29 M55.2 15.1 H79 M69.5 5.8 V29 M55.2 19.7 H79 M74.2 5.8 V29 M55.2 24.4 H79" stroke-width="1"/>
<circle cx="76.6" cy="25" r="6" fill="#fafafa"/><path d="M72.9 25 H80.3 M76.6 21.3 V28.7"/>
<path d="M104.7 6 L119.3 11 L114.6 24.7 L100.3 20 Z"/>
<path d="M99.2 17 L95.8 21 M92.2 26 L92.6 19.8 L98.2 23.4 Z" stroke-width="1.05"/>
<rect x="93.8" y="28.5" width="23.8" height="2.8" rx="1.4" fill="#b4b4b4" stroke-width="1"/>
<rect x="128" y="5.7" width="26.2" height="25.6" rx="1" stroke-width="1.35"/>
<g fill="#e6e6e6" stroke-width="1"><rect x="131" y="8.5" width="20.2" height="6.4" rx="0.8"/><rect x="131" y="17.4" width="5.6" height="11.2" rx="0.8"/><rect x="139.1" y="17.4" width="12.1" height="4.6" rx="0.8"/><rect x="139.1" y="24.1" width="12.1" height="4.5" rx="0.8"/></g>
</g>
<text opacity="0.99" x="91.6" y="13.6" font-size="5" font-weight="bold" fill="#333" textLength="9.6" lengthAdjust="spacingAndGlyphs">AUTO</text>
<g fill="none" stroke="#c9c9c9" stroke-width="1.1" stroke-linejoin="round" stroke-linecap="round">
<path d="M165.5 9.1 H188.5"/>
<rect x="165.5" y="11.4" width="23" height="2.4" rx="1.2"/>
<rect x="165.5" y="15.4" width="23" height="3" rx="1.2"/>
<rect x="165.5" y="20.3" width="23" height="3.4" rx="1.2"/>
<rect x="165.5" y="25.3" width="23" height="4.2" rx="1.2"/>
<path transform="translate(233 18.8) rotate(0)" d="M0 -13.6 L4.4 -8.6 H1.9 V-5.8 H-1.9 V-8.6 H-4.4 Z"/>
<path transform="translate(233 18.8) rotate(90)" d="M0 -13.6 L4.4 -8.6 H1.9 V-5.8 H-1.9 V-8.6 H-4.4 Z"/>
<path transform="translate(233 18.8) rotate(180)" d="M0 -13.6 L4.4 -8.6 H1.9 V-5.8 H-1.9 V-8.6 H-4.4 Z"/>
<path transform="translate(233 18.8) rotate(270)" d="M0 -13.6 L4.4 -8.6 H1.9 V-5.8 H-1.9 V-8.6 H-4.4 Z"/>
<circle cx="233" cy="18.8" r="1.9"/>
<path d="M268.7 12.7 L278.7 22.6 L268.7 32.3 L259 22.6 Z"/>
<path d="M256.2 22.8 A12.3 12.3 0 0 1 275.4 10.4"/>
<path d="M274 13.3 L280 8 L282 15.7 Z"/>
<rect x="291.8" y="5.8" width="25.9" height="25.8" stroke-dasharray="1.6 2.6" stroke-linecap="butt" stroke-width="1.4"/>
<rect x="291.8" y="17.2" width="14.5" height="14.4" fill="#fafafa"/>
<path d="M307 16.4 L308.6 18 L312.4 14.2 L313.6 15.4 L314 9.8 L308.4 10.2 L309.6 11.4 L305.8 15.2 Z" stroke-width="0.9" transform="translate(310 14) scale(0.82) translate(-310 -14)"/>
<path d="M340 6 L355 10 L351 24.7 L336.3 20.7 Z"/>
<path d="M335 17.3 L331.6 21.6 M328.2 26 L329 20.2 L333.6 23.8 Z" stroke-width="1.1"/>
<rect x="330" y="28.4" width="24.6" height="3.1" rx="1.5" fill="#ececec"/>
<rect x="365.4" y="5.7" width="23.3" height="11" rx="1"/><rect x="365.4" y="20.1" width="23.3" height="11.2" rx="1"/>
<path d="M366 18.5 H388.5" stroke-dasharray="1.2 1.4" stroke-linecap="butt"/>
<rect x="408.3" y="5.7" width="19" height="18.8" rx="1"/><rect x="399.7" y="12.7" width="19" height="18.8" rx="1"/>
<rect x="408.3" y="12.7" width="10.4" height="11.8" fill="#ececec" stroke="none"/>
<path d="M409 17 L412.6 13.2 M409 20.6 L416 13.2 M409.4 24 L418.2 14.6 M412.6 24 L418.2 18 M416 24 L418.2 21.6" stroke="#c4c4c4" stroke-width="0.7"/>
<rect x="408.3" y="12.7" width="10.4" height="11.8" stroke="#bcbcbc"/>
<path d="M449.3 6.7 L460.4 12.3 L458 16.7 L446.7 11.3 Z"/>
<rect x="445.4" y="17.4" width="12.6" height="5.8" stroke="#dcdcdc"/>
<rect x="439.4" y="23.4" width="23.9" height="7.9"/>
<path d="M444.2 12.2 L441 15.4 M437.4 20.4 L438 15 L442.4 18.6 Z" stroke-width="1.1"/>
<path d="M484 6.2 L496 18 L483.4 31 L471.7 18.6 Z M474.5 17.4 H495.4"/>
<path d="M475.2 5.8 L484 14.4" stroke="#b0b0b0" stroke-width="2.4" stroke-linecap="butt"/>
<path d="M496 20.8 C494.8 24 492.4 26.6 492.4 29.2 A3.6 3.6 0 0 0 499.6 29.2 C499.6 26.6 497.2 24 496 20.8 Z"/>
</g>
<line x1="203.6" y1="6" x2="203.6" y2="31.6" stroke="#8c8c8c" stroke-width="1.2"/>
<line x1="547.8" y1="6.3" x2="547.8" y2="31.2" stroke="#8c8c8c" stroke-width="1.2"/>
<g fill="#333"><circle cx="508.4" cy="18.7" r="0.95"/><circle cx="513.7" cy="18.7" r="0.95"/><circle cx="518.9" cy="18.7" r="0.95"/></g>
<path d="M525.3 16.7 L529.7 20.9 L534 16.7" fill="none" stroke="#333" stroke-width="1.3" stroke-linecap="round" stroke-linejoin="round"/>
<g fill="none" stroke="#474c4c" stroke-width="1.25" stroke-linejoin="round" stroke-linecap="round">
<path d="M574.4 10.8 H565.3 Q564.3 10.8 564.3 11.8 V30 Q564.3 31 565.3 31 H583.7 Q584.7 31 584.7 30 V21.2"/>
<path d="M564.3 20.8 C566 20.6 566.8 21.4 567.6 22.4 C568.8 23.8 570.6 23.8 571.6 22.4 C572.4 21.4 573.2 20.9 574.7 21"/>
<path d="M574.6 11 C575.6 12.4 574.6 13.4 573.4 14 C571.8 14.8 571.8 16.8 573.2 17.6 C574.4 18.4 574.8 19.4 574.7 21 C574.6 22.6 574.8 23.6 575.8 24.4 C577 25.4 577 27 575.8 27.8 C574.6 28.6 574.5 29.6 574.6 31"/>
<path d="M574.7 21 C576 21 577 20.6 577.6 19.8 C578.4 18.6 580.2 18.6 581 19.8 C581.6 20.7 582.6 21.1 584.7 21.1"/>
<path d="M576 11 L577.8 9.2 C576.6 8 577 6.4 578.4 6 C579.6 5.7 580.6 6.6 580.6 6.6 L583 4.3 L590.3 11.4 L582.8 18.4 C582 17.4 581.6 16.6 582.2 15.6 C582.8 14.4 581.6 13 580.2 13.4 C579 13.8 578 13.4 576 11 Z"/>
</g>
<g fill="none" stroke="#464646" stroke-width="1.5" stroke-linecap="round" stroke-linejoin="round" transform="translate(100 576) scale(1.1) translate(-100 -575)">
<path d="M92.2 571.2 V568.8 Q92.2 567.2 93.8 567.2 H96 M104 567.2 H106.2 Q107.8 567.2 107.8 568.8 V571.2 M107.8 578.8 V581.2 Q107.8 582.8 106.2 582.8 H104 M96 582.8 H93.8 Q92.2 582.8 92.2 581.2 V578.8"/>
<path d="M100 570.2 L104.2 572.6 V577.4 L100 579.8 L95.8 577.4 V572.6 Z M95.8 572.6 L100 575 L104.2 572.6 M100 575 V579.8" stroke-width="1.15"/>
</g>
</svg></body></html>
